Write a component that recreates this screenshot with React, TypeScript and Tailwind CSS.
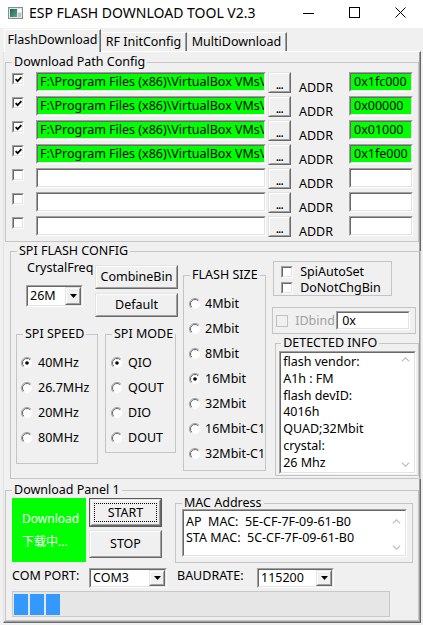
import React from "react";

type Kids = { className?: string; inner?: string; children?: React.ReactNode };

function Sunken({ className = "", inner = "", children }: Kids) {
  return (
    <div className={"border border-t-[#a0a0a0] border-l-[#a0a0a0] border-r-white border-b-white " + className}>
      <div className={"h-full w-full border border-t-[#696969] border-l-[#696969] border-r-[#e3e3e3] border-b-[#e3e3e3] " + inner}>
        {children}
      </div>
    </div>
  );
}

function Raised({ className = "", inner = "", children }: Kids) {
  return (
    <div className={"border border-t-[#e3e3e3] border-l-[#e3e3e3] border-r-[#696969] border-b-[#696969] " + className}>
      <div className={"h-full w-full border border-t-white border-l-white border-r-[#a0a0a0] border-b-[#a0a0a0] bg-[#f0f0f0] " + inner}>
        {children}
      </div>
    </div>
  );
}

function Check({ checked }: { checked?: boolean }) {
  return (
    <Sunken className="w-[12px] h-[12px] shrink-0" inner="bg-white flex items-center justify-center">
      {checked && (
        <svg width="7" height="7" viewBox="0 0 7 7">
          <path d="M0.6 3.2 L2.6 5.2 L6.4 1.2" stroke="#000" strokeWidth="1.7" fill="none" />
        </svg>
      )}
    </Sunken>
  );
}

function Radio({ on }: { on?: boolean }) {
  return (
    <svg width="12" height="12" viewBox="0 0 12 12" className="shrink-0">
      <circle cx="6" cy="6" r="5" fill="#fff" />
      <path d="M9.9 2.1 A5.5 5.5 0 0 0 2.1 9.9" stroke="#a0a0a0" fill="none" />
      <path d="M9.2 2.8 A4.5 4.5 0 0 0 2.8 9.2" stroke="#696969" fill="none" />
      {on && <circle cx="6" cy="6" r="1.8" fill="#000" />}
    </svg>
  );
}

function RadioRow({ label, on, gap }: { label: string; on?: boolean; gap: string }) {
  return (
    <div className="flex items-center h-[25px] whitespace-nowrap">
      <Radio on={on} />
      <span className={gap}>{label}</span>
    </div>
  );
}

function Combo({ value, className = "" }: { value: string; className?: string }) {
  return (
    <Sunken className={className} inner="bg-white flex items-stretch">
      <span className="flex-1 pl-[2px] flex items-center overflow-hidden whitespace-nowrap">{value}</span>
      <Raised className="w-[16px]" inner="flex items-center justify-center">
        <svg width="7" height="4" viewBox="0 0 7 4">
          <path d="M0 0 H7 L3.5 4 Z" fill="#000" />
        </svg>
      </Raised>
    </Sunken>
  );
}

function Btn({ className = "", children }: Kids) {
  return (
    <Raised className={className} inner="flex items-center justify-center">
      {children}
    </Raised>
  );
}

function Up() {
  return (
    <svg width="9" height="5" viewBox="0 0 9 5">
      <path d="M0.8 4.4 L4.5 0.8 L8.2 4.4" stroke="#bdbdbd" strokeWidth="1.2" fill="none" />
    </svg>
  );
}
function Down() {
  return (
    <svg width="9" height="5" viewBox="0 0 9 5">
      <path d="M0.8 0.6 L4.5 4.2 L8.2 0.6" stroke="#bdbdbd" strokeWidth="1.2" fill="none" />
    </svg>
  );
}

const rows = [
  { on: true, path: "F:\\Program Files (x86)\\VirtualBox VMs\\", addr: "0x1fc000" },
  { on: true, path: "F:\\Program Files (x86)\\VirtualBox VMs\\", addr: "0x00000" },
  { on: true, path: "F:\\Program Files (x86)\\VirtualBox VMs\\", addr: "0x01000" },
  { on: true, path: "F:\\Program Files (x86)\\VirtualBox VMs\\", addr: "0x1fe000" },
  { on: false, path: "", addr: "" },
  { on: false, path: "", addr: "" },
  { on: false, path: "", addr: "" },
];

const detected = ["flash vendor:", "A1h : FM", "flash devID:", "4016h", "QUAD;32Mbit", "crystal:", "26 Mhz"];

export default function App() {
  return (
    <div className="w-[423px] h-[625px] bg-[#f0f0f0] text-black text-[12.5px] leading-[16px] font-['Noto_Sans','Noto_Sans_CJK_SC',sans-serif] overflow-hidden">
      {/* Title bar */}
      <div className="h-[28px] bg-white flex items-start">
        <svg className="ml-[8px] mt-[7px]" width="15" height="12" viewBox="0 0 15 12">
          <defs>
            <linearGradient id="ic" x1="0" y1="0" x2="1" y2="1">
              <stop offset="0" stopColor="#1f5f63" />
              <stop offset="1" stopColor="#5fa882" />
            </linearGradient>
          </defs>
          <rect x="0.5" y="0.5" width="14" height="11" fill="#e4e4e4" stroke="#8c8c8c" />
          <rect x="2" y="2" width="7" height="8" fill="url(#ic)" />
          <rect x="10" y="2" width="3" height="3" fill="#ffffff" />
          <rect x="10" y="6" width="3" height="4" fill="#b9c4c4" />
        </svg>
        <span className="ml-[6px] mt-[4px] text-[14px] leading-[17px] whitespace-nowrap">ESP FLASH DOWNLOAD TOOL V2.3</span>
        <div className="ml-auto flex h-[28px]">
          <div className="w-[46px] flex justify-center pt-[7px]">
            <svg width="11" height="10" viewBox="0 0 11 10">
              <path d="M0 6.5 H11" stroke="#000" strokeWidth="1" />
            </svg>
          </div>
          <div className="w-[46px] flex justify-center pt-[7px]">
            <svg width="11" height="11" viewBox="0 0 11 11">
              <rect x="0.5" y="0.5" width="10" height="10" stroke="#000" fill="none" />
            </svg>
          </div>
          <div className="w-[46px] flex justify-center pt-[7px]">
            <svg width="11" height="11" viewBox="0 0 11 11">
              <path d="M0.5 0.5 L10.5 10.5 M10.5 0.5 L0.5 10.5" stroke="#000" strokeWidth="1" />
            </svg>
          </div>
        </div>
      </div>

      {/* Tabs */}
      <div className="flex items-end h-[23px] pl-[4px] relative z-10">
        <div className="h-[23px] w-[97px] -mb-[1px] bg-[#f0f0f0] border-t border-l border-t-white border-l-white border-r border-r-[#696969] shadow-[inset_-1px_0_0_#a0a0a0] flex items-center justify-center pb-[2px]">
          FlashDownload
        </div>
        <div className="h-[19px] w-[86px] border-t border-t-white border-r border-r-[#696969] shadow-[inset_-1px_0_0_#a0a0a0] flex items-center justify-center">
          RF InitConfig
        </div>
        <div className="h-[19px] w-[100px] border-t border-t-white border-r border-r-[#696969] shadow-[inset_-1px_0_0_#a0a0a0] flex items-center justify-center">
          MultiDownload
        </div>
      </div>

      {/* Tab panel */}
      <div className="ml-[3px] w-[418px] h-[572px] border border-l-[#e3e3e3] border-t-white border-r-[#696969] border-b-[#696969] shadow-[inset_-1px_-1px_0_#a0a0a0]">
        {/* Download Path Config */}
        <fieldset className="ml-[1px] mt-[2px] w-[414px] h-[188px] border border-[#c4c4c4]">
          <legend className="ml-[6px] px-[2px] leading-[16px]">Download Path Config</legend>
          <div className="pt-[2px]">
            {rows.map((r, i) => (
              <div key={i} className="flex items-start h-[24px]">
                <div className="ml-[6px] mt-[1px]">
                  <Check checked={r.on} />
                </div>
                <Sunken
                  className="ml-[12px] w-[230px] h-[20px]"
                  inner={(r.on ? "bg-[#00ff00]" : "bg-white") + " pl-[2px] flex items-center overflow-hidden whitespace-nowrap"}
                >
                  {r.path}
                </Sunken>
                <Btn className="ml-[2px] w-[23px] h-[21px]">
                  <span className="text-[10px] leading-[10px] mt-[4px] font-bold tracking-[-0.5px]">...</span>
                </Btn>
                <span className="ml-[8px] mt-[8px] w-[50px]">ADDR</span>
                <Sunken
                  className="w-[64px] h-[20px]"
                  inner={(r.on ? "bg-[#00ff00]" : "bg-white") + " pl-[3px] flex items-center whitespace-nowrap"}
                >
                  {r.addr}
                </Sunken>
              </div>
            ))}
          </div>
        </fieldset>

        {/* SPI FLASH CONFIG */}
        <fieldset className="ml-[6px] mt-[1px] w-[408px] h-[236px] border border-[#c4c4c4]">
          <legend className="ml-[6px] px-[2px] leading-[16px]">SPI FLASH CONFIG</legend>
          <div className="flex">
            <div className="w-[167px] shrink-0">
              <div className="flex">
                <div className="ml-[15px] w-[57px]">
                  <div className="mt-[1px] pl-[1px] whitespace-nowrap">CrystalFreq</div>
                  <Combo value="26M" className="mt-[9px] h-[22px] w-[57px]" />
                </div>
                <div className="ml-[12px] w-[83px]">
                  <Btn className="mt-[6px] h-[24px]">CombineBin</Btn>
                  <Btn className="mt-[4px] h-[24px]">Default</Btn>
                </div>
              </div>
              <div className="flex mt-[9px]">
                <fieldset className="ml-[5px] w-[82px] h-[138px] border border-[#c4c4c4]">
                  <legend className="ml-[6px] px-[2px] leading-[16px] whitespace-nowrap">SPI SPEED</legend>
                  <div className="pt-[8px] pl-[4px]">
                    <RadioRow label="40MHz" on gap="ml-[5px]" />
                    <RadioRow label="26.7MHz" gap="ml-[5px]" />
                    <RadioRow label="20MHz" gap="ml-[5px]" />
                    <RadioRow label="80MHz" gap="ml-[5px]" />
                  </div>
                </fieldset>
                <fieldset className="ml-[7px] w-[70px] h-[127px] border border-[#c4c4c4]">
                  <legend className="ml-[6px] px-[2px] leading-[16px] whitespace-nowrap">SPI MODE</legend>
                  <div className="pt-[8px] pl-[5px]">
                    <RadioRow label="QIO" on gap="ml-[5px]" />
                    <RadioRow label="QOUT" gap="ml-[5px]" />
                    <RadioRow label="DIO" gap="ml-[5px]" />
                    <RadioRow label="DOUT" gap="ml-[5px]" />
                  </div>
                </fieldset>
              </div>
            </div>

            <fieldset className="ml-[5px] mt-[8px] w-[79px] h-[204px] border border-[#c4c4c4] shrink-0">
              <legend className="ml-[6px] px-[2px] leading-[16px] whitespace-nowrap">FLASH SIZE</legend>
              <div className="pt-[8px] pl-[5px]">
                <RadioRow label="4Mbit" gap="ml-[4px]" />
                <RadioRow label="2Mbit" gap="ml-[4px]" />
                <RadioRow label="8Mbit" gap="ml-[4px]" />
                <RadioRow label="16Mbit" on gap="ml-[4px]" />
                <RadioRow label="32Mbit" gap="ml-[4px]" />
                <RadioRow label="16Mbit-C1" gap="ml-[4px]" />
                <RadioRow label="32Mbit-C1" gap="ml-[4px]" />
              </div>
            </fieldset>

            <div className="ml-[6px] w-[148px] shrink-0">
              <div className="ml-[1px] mt-[2px] w-[119px] h-[35px] border border-[#c4c4c4] pt-[2px]">
                <div className="flex items-center h-[16px]">
                  <div className="ml-[7px]">
                    <Check />
                  </div>
                  <span className="ml-[7px] whitespace-nowrap">SpiAutoSet</span>
                </div>
                <div className="flex items-center h-[16px]">
                  <div className="ml-[7px]">
                    <Check />
                  </div>
                  <span className="ml-[7px] whitespace-nowrap">DoNotChgBin</span>
                </div>
              </div>

              <div className="mt-[11px] w-[144px] h-[27px] border border-[#c4c4c4] flex items-center">
                <div className="ml-[3px] w-[12px] h-[12px] border border-[#c2c2c2] bg-[#f0f0f0] shrink-0" />
                <span className="ml-[7px] w-[41px] text-[#a0a0a0] whitespace-nowrap">IDbind</span>
                <Sunken className="w-[74px] h-[19px]" inner="bg-white pl-[4px] flex items-center">
                  0x
                </Sunken>
              </div>

              <fieldset className="ml-[3px] mt-[1px] w-[144px] h-[141px] border border-[#c4c4c4]">
                <legend className="ml-[5px] px-[2px] leading-[16px] whitespace-nowrap">DETECTED INFO</legend>
                <Sunken className="ml-[3px] w-[137px] h-[123px]" inner="bg-white flex">
                  <div className="flex-1 pl-[2px] pt-[1px] leading-[16.8px] whitespace-nowrap overflow-hidden">
                    {detected.map((d) => (
                      <div key={d}>{d}</div>
                    ))}
                  </div>
                  <div className="w-[17px] flex flex-col items-center justify-between pt-[4px] pb-[5px]">
                    <Up />
                    <Down />
                  </div>
                </Sunken>
              </fieldset>
            </div>
          </div>
        </fieldset>

        {/* Download Panel 1 */}
        <fieldset className="ml-[1px] mt-[3px] w-[414px] h-[139px] border border-[#c4c4c4]">
          <legend className="ml-[6px] px-[2px] leading-[16px]">Download Panel 1</legend>
          <div className="flex items-start">
            <div className="ml-[6px] w-[74px] h-[64px] bg-[#00ff00] text-white text-[12px] leading-[23px] pl-[10px] flex flex-col justify-center whitespace-nowrap">
              <div>Download</div>
              <div>下载中...</div>
            </div>
            <div className="ml-[3px] w-[73px]">
              <div className="h-[29px] border border-[#5a5a5a]">
                <Raised className="h-full" inner="p-[2px]">
                  <div className="h-full border border-dotted border-black flex items-center justify-center">START</div>
                </Raised>
              </div>
              <Btn className="mt-[3px] h-[28px]">STOP</Btn>
            </div>
            <fieldset className="ml-[13px] -mt-[3px] w-[238px] h-[68px] border border-[#c4c4c4]">
              <legend className="ml-[6px] px-[2px] leading-[16px] whitespace-nowrap">MAC Address</legend>
              <Sunken className="ml-[6px] -mt-[2px] w-[225px] h-[48px]" inner="bg-white flex">
                <div className="flex-1 pl-[2px] pt-[3px] whitespace-pre overflow-hidden">
                  <div>AP  MAC:  5E-CF-7F-09-61-B0</div>
                  <div>STA MAC:  5C-CF-7F-09-61-B0</div>
                </div>
                <div className="w-[17px] flex flex-col items-center justify-between pt-[8px] pb-[5px]">
                  <Up />
                  <Down />
                </div>
              </Sunken>
            </fieldset>
          </div>

          <div className="mt-[5px] flex items-start h-[20px]">
            <span className="ml-[6px] w-[77px] whitespace-nowrap">COM PORT:</span>
            <Combo value="COM3" className="w-[78px] h-[20px]" />
            <span className="ml-[10px] w-[80px] whitespace-nowrap">BAUDRATE:</span>
            <Combo value="115200" className="w-[77px] h-[20px]" />
          </div>

          <div className="mt-[3px] ml-[6px] w-[378px] h-[26px] border border-[#c8c8c8] bg-[#e6e6e6] flex gap-[2px] pl-[1px] pt-[2px]">
            <div className="w-[14px] h-[21px] bg-[#3399ff]" />
            <div className="w-[14px] h-[21px] bg-[#3399ff]" />
            <div className="w-[14px] h-[21px] bg-[#3399ff]" />
          </div>
        </fieldset>
      </div>
    </div>
  );
}
